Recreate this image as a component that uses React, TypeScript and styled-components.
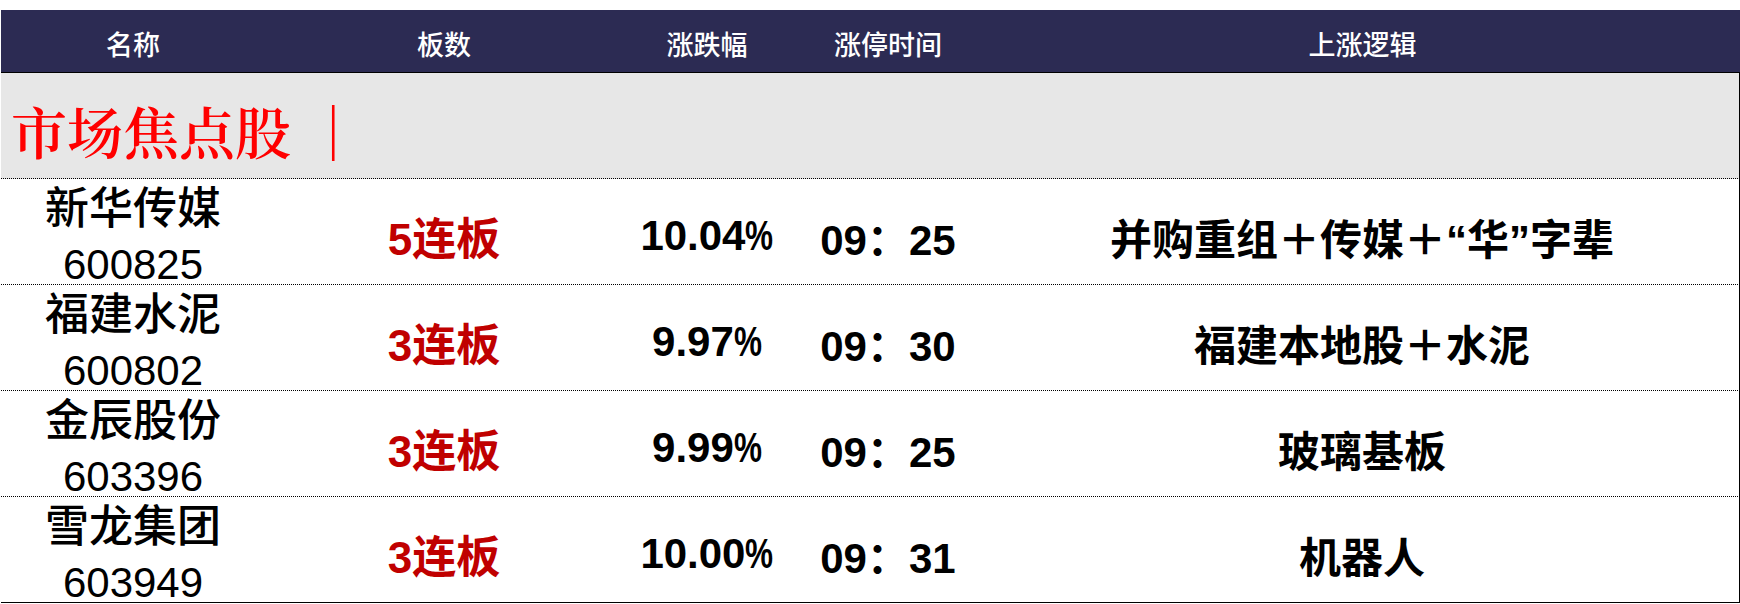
import React from 'react';
import styled, { createGlobalStyle } from 'styled-components';

interface Stock {
  name: string;
  code: string;
  boards: string;
  change: string;
  time: [string, string];
  logic: string;
}

const stocks: Stock[] = [
  { name: '新华传媒', code: '600825', boards: '5连板', change: '10.04', time: ['09', '25'], logic: '并购重组＋传媒＋“华”字辈' },
  { name: '福建水泥', code: '600802', boards: '3连板', change: '9.97', time: ['09', '30'], logic: '福建本地股＋水泥' },
  { name: '金辰股份', code: '603396', boards: '3连板', change: '9.99', time: ['09', '25'], logic: '玻璃基板' },
  { name: '雪龙集团', code: '603949', boards: '3连板', change: '10.00', time: ['09', '31'], logic: '机器人' },
];

const columns = ['名称', '板数', '涨跌幅', '涨停时间', '上涨逻辑'];

const GlobalStyle = createGlobalStyle`
  body {
    margin: 0;
    background: #ffffff;
    font-family: "Liberation Sans", "Noto Sans CJK SC", sans-serif;
  }
`;

const App = () => {
  return (
    <>
      <GlobalStyle />
      <Page>
        <Table>
          <HeaderRow>
            {columns.map(col => (
              <HeaderCell key={col}>{col}</HeaderCell>
            ))}
          </HeaderRow>
          <Section>
            <SectionTitle>
              市场焦点股 <Bar>｜</Bar>
            </SectionTitle>
          </Section>
          {stocks.map((s, i) => (
            <Row key={s.code} last={i === stocks.length - 1}>
              <NameCell>
                <Name>{s.name}</Name>
                <Code>{s.code}</Code>
              </NameCell>
              <Cell>
                <Boards>{s.boards}</Boards>
              </Cell>
              <Cell>
                <Figure>
                  {s.change}
                  <Percent>%</Percent>
                </Figure>
              </Cell>
              <Cell>
                <Figure>
                  {s.time[0]}
                  <Colon>：</Colon>
                  {s.time[1]}
                </Figure>
              </Cell>
              <Cell>
                <Logic>{s.logic}</Logic>
              </Cell>
            </Row>
          ))}
        </Table>
      </Page>
    </>
  );
};

export default App;

const gridColumns = '264px 358px 168px 194px 1fr';

const Page = styled.div`
  padding: 10px 0 0 1px;
  width: 1739px;
`;

const Table = styled.div`
  display: flex;
  flex-direction: column;
`;

const HeaderRow = styled.div`
  display: grid;
  grid-template-columns: ${gridColumns};
  height: 62px;
  background-color: #2c2b53;
  border-bottom: 1px solid #000;
`;

const HeaderCell = styled.div`
  display: flex;
  align-items: center;
  justify-content: center;
  padding-top: 4px;
  color: #ffffff;
  font-family: "Noto Sans CJK SC", sans-serif;
  font-size: 27px;
  font-weight: 500;
`;

const Section = styled.div`
  display: flex;
  align-items: center;
  height: 105px;
  padding-left: 10px;
  background-color: #e7e7e7;
  border-right: 1px solid #000;
  border-bottom: 1px dotted #000;
`;

const SectionTitle = styled.span`
  color: #ff0000;
  font-family: "Noto Serif CJK SC", "Noto Sans CJK SC", serif;
  font-size: 56px;
  font-weight: 600;
  line-height: 1;
  padding-top: 8px;
`;

const Bar = styled.span`
  font-family: "Noto Sans CJK SC", sans-serif;
  font-weight: 700;
`;

const Row = styled.div<{ last?: boolean }>`
  display: grid;
  grid-template-columns: ${gridColumns};
  height: 105px;
  border-right: 1px solid #000;
  border-bottom: 1px ${({ last }) => (last ? 'solid' : 'dotted')} #000;
`;

const Cell = styled.div`
  display: flex;
  align-items: center;
  justify-content: center;
  white-space: nowrap;
`;

const NameCell = styled.div`
  display: flex;
  flex-direction: column;
  align-items: center;
  padding-top: 2px;
  line-height: 56px;
  white-space: nowrap;
`;

const Name = styled.div`
  font-size: 44px;
  font-weight: 500;
  color: #000;
`;

const Code = styled.div`
  font-size: 42px;
  color: #000;
`;

const Boards = styled.span`
  font-size: 44px;
  font-weight: 700;
  color: #c00000;
`;

const Figure = styled.span`
  font-size: 42px;
  font-weight: 700;
  color: #000;
`;

const Percent = styled.span`
  display: inline-block;
  transform: scaleX(0.75);
  transform-origin: left center;
  margin-right: -0.22em;
`;

const Colon = styled.span`
  font-family: "Noto Sans CJK SC", sans-serif;
`;

const Logic = styled.span`
  font-size: 42px;
  font-weight: 700;
  color: #000;
`;
